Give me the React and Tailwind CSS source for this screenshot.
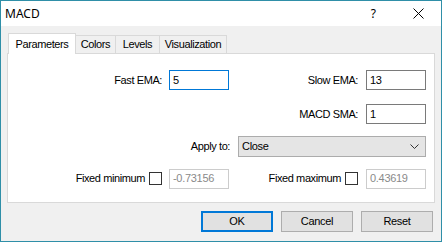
import React from 'react'

function Label({ children, className = '' }) {
  return (
    <span className={`whitespace-nowrap text-[11px] tracking-[-0.4px] text-black ${className}`}>{children}</span>
  )
}

function Field({ value, focused, disabled }) {
  const border = focused
    ? 'border-[#0078d7]'
    : disabled
      ? 'border-[#cccccc]'
      : 'border-[#7a7a7a]'
  return (
    <div
      className={`flex h-[20px] w-[60px] items-center border bg-white pl-[3px] text-[11px] tracking-[-0.3px] ${border} ${
        disabled ? 'text-[#8a8a8a]' : 'text-black'
      }`}
    >
      {value}
    </div>
  )
}

function Check() {
  return <div className="h-[13px] w-[13px] border border-[#333333] bg-white" />
}

function Button({ children, primary }) {
  return (
    <div
      className={`flex h-[21px] w-[72px] items-center justify-center bg-[#e1e1e1] text-[11px] tracking-[-0.3px] text-black ${
        primary ? 'border-2 border-[#0078d7]' : 'border border-[#adadad]'
      }`}
    >
      {children}
    </div>
  )
}

export default function App() {
  const tabs = ['Colors', 'Levels', 'Visualization']
  const widths = ['w-[40px]', 'w-[44px]', 'w-[67px]']

  return (
    <div
      className="flex h-[242px] w-[442px] flex-col border border-[#2f8fa8] bg-[#f0f0f0]"
      style={{ fontFamily: '"Liberation Sans", Arial, sans-serif' }}
    >
      {/* title bar */}
      <div className="flex h-[25px] items-center bg-white">
        <span className="pl-[4px] text-[12px] text-black" style={{ fontFamily: '"Noto Sans", sans-serif' }}>
          MACD
        </span>
        <span className="ml-auto mr-[37px] text-[12px] text-black" style={{ fontFamily: '"Noto Sans", sans-serif' }}>
          ?
        </span>
        <svg width="11" height="11" viewBox="0 0 11 11" className="mr-[17px]">
          <path d="M0.5 0.5 L10.5 10.5 M10.5 0.5 L0.5 10.5" stroke="#000" strokeWidth="1" />
        </svg>
      </div>

      {/* tabs */}
      <div className="flex items-end pl-[7px] pt-[7px] text-[11px] tracking-[-0.4px]">
        <div className="relative z-10 -mb-px flex h-[21px] w-[68px] items-center justify-center border border-b-0 border-[#d9d9d9] bg-white">
          Parameters
        </div>
        {tabs.map((t, i) => (
          <div
            key={t}
            className={`flex h-[18px] items-center justify-center border border-b-0 border-l-0 border-[#d9d9d9] bg-[#f0f0f0] ${widths[i]}`}
          >
            {t}
          </div>
        ))}
      </div>

      {/* panel */}
      <div className="mx-[6px] flex h-[150px] flex-col border border-[#d9d9d9] bg-white pr-[8px] pt-[16px]">
        <div className="flex h-[20px] items-center">
          <div className="flex w-[221px] items-center justify-end gap-[7px]">
            <Label>Fast EMA:</Label>
            <Field value="5" focused />
          </div>
          <div className="flex flex-1 items-center justify-end gap-[8px]">
            <Label>Slow EMA:</Label>
            <Field value="13" />
          </div>
        </div>

        <div className="mt-[14px] flex h-[20px] items-center justify-end gap-[8px]">
          <Label>MACD SMA:</Label>
          <Field value="1" />
        </div>

        <div className="mt-[12px] flex h-[21px] items-center justify-end gap-[8px]">
          <Label>Apply to:</Label>
          <div className="flex h-[21px] w-[188px] items-center justify-between border border-[#acacac] bg-[#e5e5e5] pl-[3px] pr-[6px] text-[11px] tracking-[-0.3px]">
            <span>Close</span>
            <svg width="9" height="5" viewBox="0 0 9 5">
              <path d="M0.5 0.5 L4.5 4.5 L8.5 0.5" fill="none" stroke="#333" strokeWidth="1" />
            </svg>
          </div>
        </div>

        <div className="mt-[12px] flex h-[19px] items-center">
          <div className="flex w-[221px] items-center justify-end">
            <Label className="mr-[4px]">Fixed minimum</Label>
            <Check />
            <div className="ml-[7px]">
              <Field value="-0.73156" disabled />
            </div>
          </div>
          <div className="flex flex-1 items-center justify-end">
            <Label className="mr-[4px]">Fixed maximum</Label>
            <Check />
            <div className="ml-[8px]">
              <Field value="0.43619" disabled />
            </div>
          </div>
        </div>
      </div>

      {/* buttons */}
      <div className="mt-[8px] flex justify-end gap-[8px] pr-[8px]">
        <Button primary>OK</Button>
        <Button>Cancel</Button>
        <Button>Reset</Button>
      </div>
    </div>
  )
}
